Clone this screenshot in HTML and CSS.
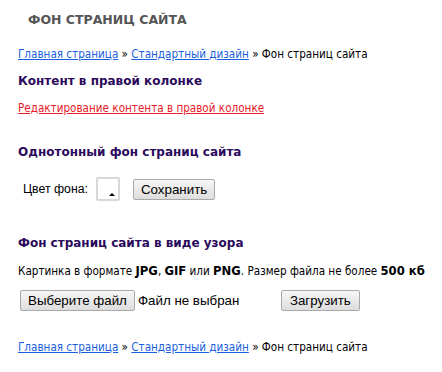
FILE: index.html
```html
<!DOCTYPE html>
<html lang="ru">
<head>
<meta charset="utf-8">
<title>Фон страниц сайта</title>
<link rel="stylesheet" href="styles.css">
</head>
<body>
<div class="page">
  <h1 class="title">ФОН СТРАНИЦ САЙТА</h1>
  <div class="crumbs"><a href="#">Главная страница</a> » <a href="#">Стандартный дизайн</a> » Фон страниц сайта</div>

  <h2 class="head head-first">Контент в правой колонке</h2>
  <a class="red-link" href="#">Редактирование контента в правой колонке</a>

  <h2 class="head head-solid">Однотонный фон страниц сайта</h2>
  <div class="color-row">
    <span class="label">Цвет фона:</span>
    <span class="swatch"><span class="tri"></span></span>
    <button class="btn btn-save">Сохранить</button>
  </div>

  <h2 class="head head-pattern">Фон страниц сайта в виде узора</h2>
  <p class="note">Картинка в формате <b>JPG</b>, <b>GIF</b> или <b>PNG</b>. Размер файла не более <b>500 кб</b></p>
  <div class="file-row">
    <button class="btn btn-file">Выберите файл</button>
    <span class="file-name">Файл не выбран</span>
    <button class="btn btn-upload">Загрузить</button>
  </div>

  <div class="crumbs crumbs-bottom"><a href="#">Главная страница</a> » <a href="#">Стандартный дизайн</a> » Фон страниц сайта</div>
</div>
</body>
</html>
```

FILE: styles.css
```css
html, body {
  margin: 0;
  padding: 0;
  background: #fff;
}
.page {
  padding: 0 0 0 18px;
  font-family: "DejaVu Sans Condensed", "DejaVu Sans", sans-serif;
  font-size: 11.6px;
  color: #000;
}
.title {
  margin: 0;
  padding: 12px 0 0 10px;
  height: 22px;
  font-size: 12.5px;
  line-height: 15px;
  font-weight: bold;
  color: #555;
  font-family: "DejaVu Sans", sans-serif;
}
.crumbs {
  margin-top: 12px;
  line-height: 16px;
  color: #000;
}
.crumbs a {
  color: #1a5fe0;
  text-decoration: underline;
}
.head {
  margin: 0;
  font-size: 12px;
  line-height: 16px;
  font-weight: bold;
  color: #2b0a5c;
  font-family: "DejaVu Sans", sans-serif;
}
.head-first { margin-top: 11px; }
.red-link {
  display: block;
  margin-top: 11px;
  line-height: 16px;
  color: #e8202a;
}
.head-solid { margin-top: 28px; }
.color-row {
  display: flex;
  align-items: center;
  margin-top: 17px;
  padding-left: 5px;
  height: 24px;
}
.label {
  font-family: "Liberation Sans", Arial, sans-serif;
  font-size: 12.3px;
  color: #000;
}
.swatch {
  position: relative;
  box-sizing: border-box;
  width: 24px;
  height: 24px;
  margin-left: 8px;
  border: 2px solid #d8d8d8;
  border-radius: 2px;
  background: #fff;
}
.tri {
  position: absolute;
  right: 3px;
  bottom: 3px;
  width: 0;
  height: 0;
  border-left: 3px solid transparent;
  border-right: 3px solid transparent;
  border-bottom: 3px solid #000;
}
.btn {
  font-family: "Liberation Sans", Arial, sans-serif;
  font-size: 13.33px;
  color: #000;
  background: linear-gradient(#f7f7f7, #dddddd);
  border: 1px solid #a9a9a9;
  border-radius: 2px;
  padding: 0 7px;
  height: 21px;
  line-height: 19px;
}
.btn-save { margin-left: 13px; }
.btn-upload { padding: 0 8px; }
.head-pattern { margin-top: 34px; }
.note {
  margin: 12px 0 0 0;
  line-height: 16px;
}
.note b {
  font-family: "DejaVu Sans", sans-serif;
}
.file-row {
  display: flex;
  align-items: center;
  margin-top: 11px;
  padding-left: 2px;
  height: 21px;
}
.file-name {
  margin-left: 3px;
  font-family: "Liberation Sans", Arial, sans-serif;
  font-size: 13.33px;
  width: 143px;
}
.crumbs-bottom { margin-top: 28px; }
```
